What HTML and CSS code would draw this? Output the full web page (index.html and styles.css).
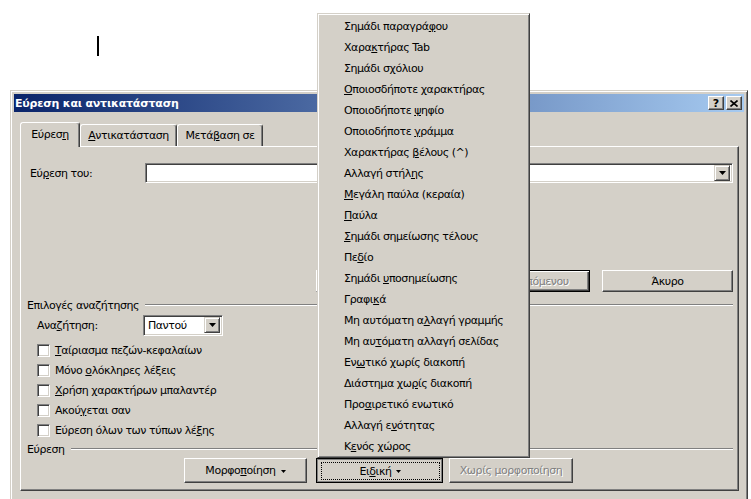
FILE: index.html
```html
<!DOCTYPE html>
<html lang="el">
<head>
    <meta charset="UTF-8">
    <title>Εύρεση και αντικατάσταση</title>
    <link rel="stylesheet" href="styles.css">
</head>
<body>
    <div class="doc">
        <span class="caret"></span>
    </div>

    <div class="dialog">
        <div class="titlebar">
            <span class="title">Εύρεση και αντικατάσταση</span>
            <span class="tbtn help">?</span>
            <span class="tbtn close">
                <svg width="8" height="7" viewBox="0 0 8 7"><path d="M0.5 0.5 L7.5 6.5 M7.5 0.5 L0.5 6.5" stroke="#000" stroke-width="1.6"/></svg>
            </span>
        </div>

        <div class="tabs">
            <div class="tab active">Εύρεσ<u>η</u></div>
            <div class="tab replace"><u>Α</u>ντικατάσταση</div>
            <div class="tab goto">Μετά<u>β</u>αση σε</div>
        </div>

        <div class="panel">
            <div class="find-row">
                <span class="find-label">Εύ<u>ρ</u>εση του:</span>
                <div class="combo wide">
                    <span class="combo-text"></span>
                    <span class="drop"><svg width="7" height="4" viewBox="0 0 7 4"><polygon points="0,0 7,0 3.5,4" fill="#000"/></svg></span>
                </div>
            </div>

            <div class="action-row">
                <!-- "less" button, hidden under the open menu -->
                <span class="btn"></span>
                <span class="btn default disabled"><span class="next-label">Εύρεση επόμενου</span></span>
                <span class="btn"><span>Άκυρο</span></span>
            </div>

            <div class="group">
                <span>Επιλογές αναζήτησης</span>
                <span class="rule"></span>
            </div>

            <div class="search-row">
                <span class="search-label">Ανα<u>ζ</u>ήτηση:</span>
                <div class="combo small">
                    <span class="combo-text">Παντού</span>
                    <span class="drop"><svg width="7" height="4" viewBox="0 0 7 4"><polygon points="0,0 7,0 3.5,4" fill="#000"/></svg></span>
                </div>
            </div>

            <div class="check-row"><span class="box"></span><span><u>Τ</u>αίριασμα πεζών-κεφαλαίων</span></div>
            <div class="check-row"><span class="box"></span><span>Μόνο <u>ο</u>λόκληρες λέξεις</span></div>
            <div class="check-row"><span class="box"></span><span><u>Χ</u>ρήση χαρακτήρων μπαλαντέρ</span></div>
            <div class="check-row"><span class="box"></span><span>Ακού<u>γ</u>εται σαν</span></div>
            <div class="check-row"><span class="box"></span><span>Εύρεση όλων των τύπων λέ<u>ξ</u>ης</span></div>

            <div class="group">
                <span>Εύρεση</span>
                <span class="rule"></span>
            </div>

            <div class="bottom-row">
                <span class="btn fmt"><span>Μορφο<u>π</u>οίηση</span><svg class="tri" width="5" height="3" viewBox="0 0 5 3"><polygon points="0,0 5,0 2.5,3" fill="#000"/></svg></span>
                <span class="btn special pressed"><span class="focus"><span>Ει<u>δ</u>ική</span><svg class="tri" width="5" height="3" viewBox="0 0 5 3"><polygon points="0,0 5,0 2.5,3" fill="#000"/></svg></span></span>
                <span class="btn noformat disabled"><span>Χωρίς μορφοποίηση</span></span>
            </div>
        </div>
    </div>

    <div class="menu">
        <div class="item">Σημάδι παραγρά<u>φ</u>ου</div>
        <div class="item">Χαρα<u>κ</u>τήρας Tab</div>
        <div class="item">Σημάδι σ<u>χ</u>όλιου</div>
        <div class="item"><u>Ο</u>ποιοσδήποτε χαρακτήρας</div>
        <div class="item">Οποιοδήποτε <u>ψ</u>ηφίο</div>
        <div class="item">Οποιοδήποτε <u>γ</u>ράμμα</div>
        <div class="item">Χαρακτήρας <u>β</u>έλους (^)</div>
        <div class="item">Αλλαγή στήλ<u>η</u>ς</div>
        <div class="item"><u>Μ</u>εγάλη παύλα (κεραία)</div>
        <div class="item"><u>Π</u>αύλα</div>
        <div class="item"><u>Σ</u>ημάδι σημείωσης τέλους</div>
        <div class="item">Πε<u>δ</u>ίο</div>
        <div class="item">Σημάδι <u>υ</u>ποσημείωσης</div>
        <div class="item">Γραφι<u>κ</u>ά</div>
        <div class="item">Μη αυτόματη α<u>λ</u>λαγή γραμμής</div>
        <div class="item">Μη αυ<u>τ</u>όματη αλλαγή σελίδας</div>
        <div class="item">Εν<u>ω</u>τικό χωρίς διακοπή</div>
        <div class="item">Διάστημα χω<u>ρ</u>ίς διακοπή</div>
        <div class="item">Προ<u>α</u>ιρετικό ενωτικό</div>
        <div class="item">Αλλαγή ε<u>ν</u>ότητας</div>
        <div class="item">Κ<u>ε</u>νός χώρος</div>
    </div>
</body>
</html>
```

FILE: styles.css
```css
* {
    box-sizing: border-box;
}
html, body {
    margin: 0;
    padding: 0;
}
body {
    width: 751px;
    height: 499px;
    overflow: hidden;
    position: relative;
    background-color: #ffffff;
    color: #000000;
    font-family: "DejaVu Sans", Tahoma, sans-serif;
    font-size: 11px;
    letter-spacing: -0.45px;
}
u {
    text-underline-offset: 1px;
}

/* document area behind the dialog */
.doc {
    height: 90px;
    padding: 36px 0 0 97px;
}
.caret {
    display: block;
    width: 2px;
    height: 20px;
    background-color: #000;
}

/* dialog window */
.dialog {
    margin-left: 10px;
    width: 738px;
    height: 430px;
    padding: 3px;
    background-color: #d4d0c8;
    border: 1px solid;
    border-color: #d4d0c8 #404040 #404040 #d4d0c8;
    box-shadow: inset 1px 1px #fff, inset -1px -1px #808080;
}
.titlebar {
    display: flex;
    align-items: center;
    height: 18px;
    padding: 0 2px 0 1px;
    background: linear-gradient(to right, #0a246a, #a6caf0);
}
.title {
    flex: 1;
    color: #fff;
    font-weight: bold;
    letter-spacing: -0.2px;
}
.tbtn {
    display: flex;
    align-items: center;
    justify-content: center;
    width: 16px;
    height: 14px;
    background-color: #d4d0c8;
    border: 1px solid;
    border-color: #fff #404040 #404040 #fff;
    box-shadow: inset -1px -1px #808080;
    font-weight: bold;
    font-size: 11px;
    line-height: 1;
    letter-spacing: 0;
}
.help {
    margin-right: 2px;
}

/* tabs */
.tabs {
    display: flex;
    align-items: flex-end;
    height: 24px;
    margin: 10px 0 0 6px;
}
.tab {
    height: 22px;
    padding-top: 4px;
    text-align: center;
    border: 1px solid;
    border-bottom: none;
    border-color: #fff #404040 transparent #fff;
    border-radius: 3px 3px 0 0;
    box-shadow: inset -1px 0 #808080;
}
.tab.active {
    position: relative;
    z-index: 1;
    width: 60px;
    height: 25px;
    margin-bottom: -1px;
    padding-top: 5px;
    background-color: #d4d0c8;
}
.tab.replace {
    width: 97px;
}
.tab.goto {
    width: 86px;
}

/* tab panel */
.panel {
    margin-left: 6px;
    width: 719px;
    padding: 16px 5px 7px 6px;
    border: 1px solid;
    border-color: #fff #404040 #404040 #fff;
    box-shadow: inset -1px -1px #808080;
}
.find-row {
    display: flex;
    align-items: center;
    height: 20px;
}
.find-label {
    width: 118px;
    padding-left: 3px;
}

/* combo boxes */
.combo {
    display: flex;
    align-items: center;
    padding: 2px;
    background-color: #fff;
    border: 1px solid;
    border-color: #808080 #fff #fff #808080;
    box-shadow: inset 1px 1px #404040, inset -1px -1px #d4d0c8;
}
.combo.wide {
    flex: 1;
    height: 20px;
}
.combo.small {
    width: 80px;
    height: 21px;
}
.combo-text {
    flex: 1;
    padding-left: 2px;
}
.drop {
    display: flex;
    align-items: center;
    justify-content: center;
    width: 16px;
    height: 16px;
    background-color: #d4d0c8;
    border: 1px solid;
    border-color: #d4d0c8 #404040 #404040 #d4d0c8;
    box-shadow: inset 1px 1px #fff, inset -1px -1px #808080;
}

/* buttons */
.action-row {
    display: flex;
    justify-content: flex-end;
    gap: 12px;
    margin-top: 87px;
    height: 22px;
}
.btn {
    display: flex;
    align-items: center;
    justify-content: center;
    gap: 5px;
    width: 131px;
    height: 22px;
    white-space: nowrap;
    background-color: #d4d0c8;
    border: 1px solid;
    border-color: #fff #404040 #404040 #fff;
    box-shadow: inset -1px -1px #808080;
}
.btn.default {
    border-color: #000;
    box-shadow: inset 1px 1px #fff, inset -1px -1px #404040, inset -2px -2px #808080;
}
.btn.disabled {
    color: #808080;
    text-shadow: 1px 1px #fff;
}
.tri {
    margin-top: 1px;
}

/* group headings */
.group {
    display: flex;
    align-items: center;
    height: 14px;
    margin-top: 6px;
}
.rule {
    flex: 1;
    height: 2px;
    margin-left: 6px;
    border-top: 1px solid #808080;
    border-bottom: 1px solid #fff;
}
.search-row {
    display: flex;
    align-items: center;
    height: 22px;
    margin-top: 2px;
    padding-left: 10px;
}
.search-label {
    width: 106px;
}
.search-row + .check-row {
    margin-top: 4px;
}
.check-row {
    display: flex;
    align-items: center;
    height: 20px;
    padding-left: 10px;
}
.box {
    width: 13px;
    height: 13px;
    margin-right: 5px;
    background-color: #fff;
    border: 1px solid;
    border-color: #808080 #fff #fff #808080;
    box-shadow: inset 1px 1px #404040, inset -1px -1px #d4d0c8;
}
.check-row + .group {
    margin-top: 2px;
}
.bottom-row {
    display: flex;
    height: 25px;
    margin-top: 2px;
    padding-left: 157px;
}
.bottom-row .btn {
    height: 25px;
}
.btn.fmt {
    width: 123px;
}
.btn.special {
    width: 127px;
    margin-left: 9px;
}
.btn.pressed {
    border-color: #000;
    box-shadow: inset 1px 1px #808080, inset -1px -1px #808080;
    padding: 3px 2px 2px 4px;
}
.focus {
    display: flex;
    align-items: center;
    justify-content: center;
    gap: 5px;
    width: 100%;
    height: 100%;
    border: 1px dotted #000;
}
.btn.noformat {
    width: 124px;
    margin-left: 6px;
}

/* "Ειδική" drop-down menu, lies over the dialog */
.menu {
    position: absolute;
    left: 317px;
    top: 13px;
    width: 213px;
    height: 445px;
    padding: 2px;
    background-color: #d4d0c8;
    border: 1px solid;
    border-color: #d4d0c8 #404040 #404040 #d4d0c8;
    box-shadow: inset 1px 1px #fff, inset -1px -1px #808080;
}
.item {
    height: 21px;
    line-height: 21px;
    padding-left: 24px;
    white-space: nowrap;
}
```
